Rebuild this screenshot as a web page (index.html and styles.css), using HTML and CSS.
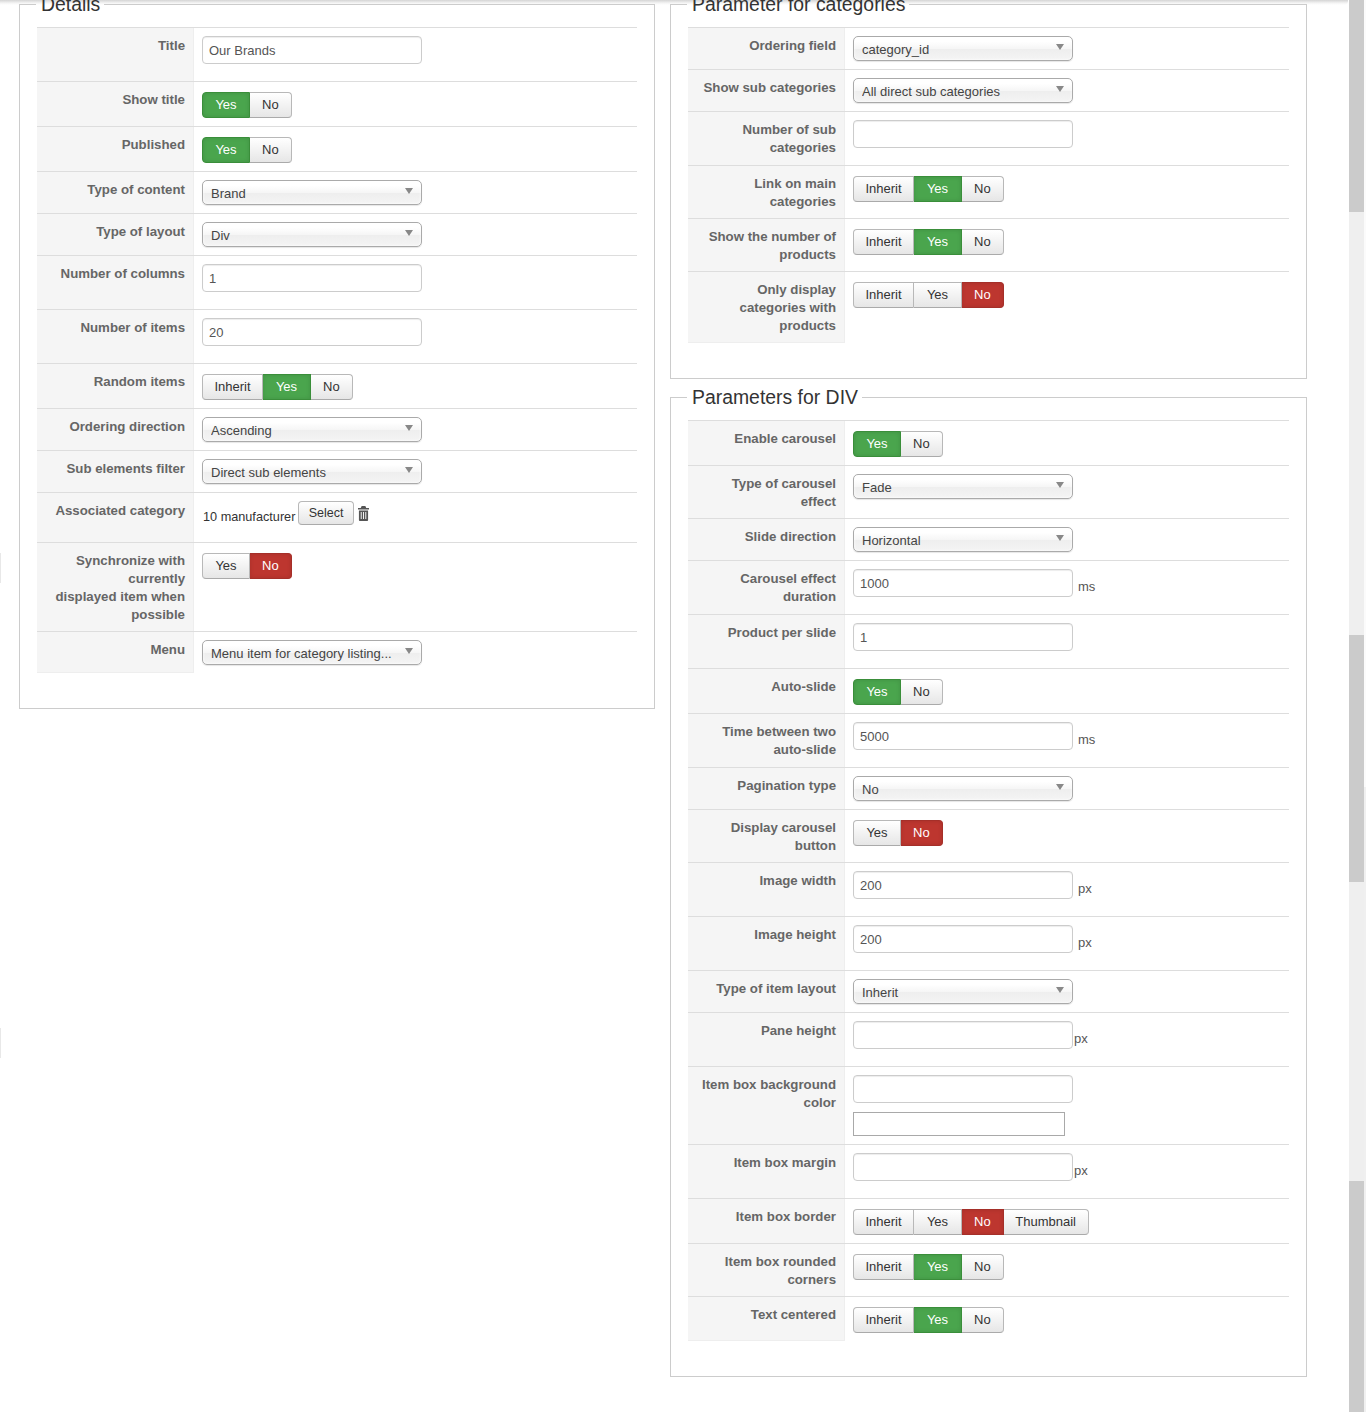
FILE: index.html
```html
<!DOCTYPE html>
<html lang="en">
<head>
<meta charset="utf-8">
<title>Module parameters</title>
<link rel="stylesheet" href="styles.css">
</head>
<body>
<div class="topshadow"></div>
<div class="edgemark edgemark-a"></div>
<div class="edgemark edgemark-b"></div>
<main class="columns">
  <div class="col">
    <fieldset class="panel">
      <legend>Details</legend>
      <div class="row"><div class="lbl">Title</div><div class="val"><div class="inp">Our Brands</div></div></div>
      <div class="row"><div class="lbl">Show title</div><div class="val"><div class="tg"><span class="b yes">Yes</span><span class="b">No</span></div></div></div>
      <div class="row"><div class="lbl">Published</div><div class="val"><div class="tg"><span class="b yes">Yes</span><span class="b">No</span></div></div></div>
      <div class="row"><div class="lbl">Type of content</div><div class="val"><div class="sel"><span class="seltxt">Brand</span><i class="arrow"></i></div></div></div>
      <div class="row"><div class="lbl">Type of layout</div><div class="val"><div class="sel"><span class="seltxt">Div</span><i class="arrow"></i></div></div></div>
      <div class="row"><div class="lbl">Number of columns</div><div class="val"><div class="inp">1</div></div></div>
      <div class="row"><div class="lbl">Number of items</div><div class="val"><div class="inp">20</div></div></div>
      <div class="row"><div class="lbl">Random items</div><div class="val"><div class="tg"><span class="b inh">Inherit</span><span class="b yes">Yes</span><span class="b">No</span></div></div></div>
      <div class="row"><div class="lbl">Ordering direction</div><div class="val"><div class="sel"><span class="seltxt">Ascending</span><i class="arrow"></i></div></div></div>
      <div class="row"><div class="lbl">Sub elements filter</div><div class="val"><div class="sel"><span class="seltxt">Direct sub elements</span><i class="arrow"></i></div></div></div>
      <div class="row"><div class="lbl">Associated category</div><div class="val assoc"><span class="assoc-txt">10 manufacturer</span><span class="selectbtn">Select</span><svg class="trash" viewBox="0 0 12 15" width="11" height="15" preserveAspectRatio="none" aria-hidden="true"><path d="M4 0h4l1 2h3v1.500H0V2h3zM1 4.500h10V14a1 1 0 0 1-1 1H2a1 1 0 0 1-1-1zM3 6v7h1V6zM5.500 6v7h1V6zM8 6v7h1V6z" fill="#555" fill-rule="evenodd"/></svg></div></div>
      <div class="row"><div class="lbl">Synchronize with currently displayed&nbsp;item&nbsp;when possible</div><div class="val"><div class="tg"><span class="b off">Yes</span><span class="b no">No</span></div></div></div>
      <div class="row last"><div class="lbl">Menu</div><div class="val"><div class="sel"><span class="seltxt">Menu item for category listing...</span><i class="arrow"></i></div></div></div>
    </fieldset>
  </div>
  <div class="col">
    <fieldset class="panel">
      <legend>Parameter for categories</legend>
      <div class="row"><div class="lbl">Ordering field</div><div class="val"><div class="sel"><span class="seltxt">category_id</span><i class="arrow"></i></div></div></div>
      <div class="row"><div class="lbl">Show sub categories</div><div class="val"><div class="sel"><span class="seltxt">All direct sub categories</span><i class="arrow"></i></div></div></div>
      <div class="row"><div class="lbl">Number of sub categories</div><div class="val"><div class="inp"></div></div></div>
      <div class="row"><div class="lbl">Link on main categories</div><div class="val"><div class="tg"><span class="b inh">Inherit</span><span class="b yes">Yes</span><span class="b">No</span></div></div></div>
      <div class="row"><div class="lbl">Show the number of products</div><div class="val"><div class="tg"><span class="b inh">Inherit</span><span class="b yes">Yes</span><span class="b">No</span></div></div></div>
      <div class="row last"><div class="lbl">Only display categories with products</div><div class="val"><div class="tg"><span class="b inh">Inherit</span><span class="b off">Yes</span><span class="b no">No</span></div></div></div>
    </fieldset>
    <fieldset class="panel">
      <legend>Parameters for DIV</legend>
      <div class="row"><div class="lbl">Enable carousel</div><div class="val"><div class="tg"><span class="b yes">Yes</span><span class="b">No</span></div></div></div>
      <div class="row"><div class="lbl">Type of carousel effect</div><div class="val"><div class="sel"><span class="seltxt">Fade</span><i class="arrow"></i></div></div></div>
      <div class="row"><div class="lbl">Slide direction</div><div class="val"><div class="sel"><span class="seltxt">Horizontal</span><i class="arrow"></i></div></div></div>
      <div class="row"><div class="lbl">Carousel effect duration</div><div class="val flexline"><div class="inp">1000</div><span class="unit">ms</span></div></div>
      <div class="row"><div class="lbl">Product per slide</div><div class="val"><div class="inp">1</div></div></div>
      <div class="row"><div class="lbl">Auto-slide</div><div class="val"><div class="tg"><span class="b yes">Yes</span><span class="b">No</span></div></div></div>
      <div class="row"><div class="lbl">Time between two auto-slide</div><div class="val flexline"><div class="inp">5000</div><span class="unit">ms</span></div></div>
      <div class="row"><div class="lbl">Pagination type</div><div class="val"><div class="sel"><span class="seltxt">No</span><i class="arrow"></i></div></div></div>
      <div class="row"><div class="lbl">Display carousel button</div><div class="val"><div class="tg"><span class="b off">Yes</span><span class="b no">No</span></div></div></div>
      <div class="row"><div class="lbl">Image width</div><div class="val flexline"><div class="inp">200</div><span class="unit">px</span></div></div>
      <div class="row"><div class="lbl">Image height</div><div class="val flexline"><div class="inp">200</div><span class="unit">px</span></div></div>
      <div class="row"><div class="lbl">Type of item layout</div><div class="val"><div class="sel"><span class="seltxt">Inherit</span><i class="arrow"></i></div></div></div>
      <div class="row"><div class="lbl">Pane height</div><div class="val flexline"><div class="inp"></div><span class="unit tight">px</span></div></div>
      <div class="row"><div class="lbl">Item box background color</div><div class="val"><div class="inp"></div><div class="colorbox"></div></div></div>
      <div class="row"><div class="lbl">Item box margin</div><div class="val flexline"><div class="inp"></div><span class="unit tight">px</span></div></div>
      <div class="row"><div class="lbl">Item box border</div><div class="val"><div class="tg"><span class="b inh">Inherit</span><span class="b off">Yes</span><span class="b no">No</span><span class="b thumb">Thumbnail</span></div></div></div>
      <div class="row"><div class="lbl">Item box rounded corners</div><div class="val"><div class="tg"><span class="b inh">Inherit</span><span class="b yes">Yes</span><span class="b">No</span></div></div></div>
      <div class="row last"><div class="lbl">Text centered</div><div class="val"><div class="tg"><span class="b inh">Inherit</span><span class="b yes">Yes</span><span class="b">No</span></div></div></div>
    </fieldset>
  </div>
</main>
<aside class="scrollbar">
  <div class="thumb t1"></div>
  <div class="track t2"></div>
  <div class="thumb t3"></div>
  <div class="track t4"></div>
  <div class="thumb t5"></div>
</aside>
<div class="scroll-edge"></div>
</body>
</html>
```
FILE: styles.css
```css
* { box-sizing: border-box; }
html, body { margin: 0; padding: 0; height: 1412px; overflow: hidden; background: #fff; }
body {
  display: flex;
  font-family: "Liberation Sans", Arial, sans-serif;
  font-size: 13px;
  line-height: 18px;
  color: #333;
  position: relative;
}
.topshadow {
  position: absolute; left: 0; top: 0; width: 1348px; height: 5px;
  background: linear-gradient(#d4d4d4, #f4f4f4 60%, rgba(255,255,255,0));
  border-bottom-right-radius: 4px;
}
.edgemark { position: absolute; left: 0; width: 1px; height: 30px; background: #e8e8e8; }
.edgemark-a { top: 553px; }
.edgemark-b { top: 1028px; }
.columns {
  position: relative;
  flex: 0 0 1349px;
  display: grid;
  grid-template-columns: 636px 637px;
  column-gap: 15px;
  align-items: start;
  padding-left: 19px;
  margin-top: -8px;
}
.col { display: flex; flex-direction: column; row-gap: 6px; }
.panel {
  margin: 0;
  min-width: 0;
  border: 1px solid #ccc;
  padding: 11px 17px 35px;
}
legend {
  margin-left: -1px;
  padding: 0 4px 0 5px;
  font-size: 19.4px;
  line-height: 24px;
  color: #333;
}
.row { display: flex; border-top: 1px solid #ddd; }
.lbl {
  flex: 0 0 157px;
  padding: 9px 8px 7px 8px;
  background: #f5f5f5;
  border-right: 1px solid #eee;
  text-align: right;
  font-size: 13.25px;
  font-weight: bold;
  color: #666;
}
.row.last .lbl { border-bottom: 1px solid #eee; }
.val { flex: 1; padding: 8px; min-width: 0; }
.flexline { display: flex; align-items: flex-start; }
.inp {
  width: 220px; height: 28px; margin-bottom: 9px;
  padding: 4px 6px;
  border: 1px solid #ccc; border-radius: 4px;
  box-shadow: inset 0 1px 1px rgba(0,0,0,.075);
  color: #555; line-height: 20px; background: #fff;
}
.unit { margin: 8px 0 0 5px; color: #555; line-height: 20px; }
.unit.tight { margin-left: 1px; }
.colorbox { width: 212px; height: 24px; border: 1px solid #a9a9a9; background: #fff; }
.sel {
  display: flex; align-items: center;
  width: 220px; height: 25px; padding: 2px 8px 0;
  border: 1px solid #aaa; border-radius: 5px;
  background: linear-gradient(#fff 20%, #f6f6f6 50%, #eee 52%, #f4f4f4 100%);
  box-shadow: 0 0 3px #fff inset, 0 1px 1px rgba(0,0,0,.1);
  color: #444;
}
.seltxt { flex: 1; overflow: hidden; white-space: nowrap; }
.arrow {
  flex: none; margin: -5px 0 0 4px;
  border-left: 4px solid transparent; border-right: 4px solid transparent;
  border-top: 6px solid #888;
}
.tg { display: inline-flex; margin-top: 2px; height: 26px; vertical-align: top; }
.b {
  display: block; padding: 3px 12px; text-align: center;
  border: 1px solid #b8b8b8; border-bottom-color: #aaa; border-left-width: 0;
  background: linear-gradient(#fff, #e6e6e6);
  color: #333; line-height: 18px;
}
.b:first-child { border-left-width: 1px; border-radius: 4px 0 0 4px; }
.b:last-child { border-radius: 0 4px 4px 0; }
.b.inh { width: 61px; padding: 3px 0; }
.b.off, .b.yes { width: 48px; padding: 3px 0; }
.b.thumb { width: 85px; padding: 3px 0; }
.b.yes { background: #4aa54d; border-color: #3a8e3a; color: #fff; box-shadow: inset 0 0 4px rgba(0,0,0,.12); }
.b.no { background: #bd362f; border-color: #a52f29; color: #fff; box-shadow: inset 0 0 4px rgba(0,0,0,.12); }
.assoc { display: flex; align-items: flex-start; min-height: 49px; }
.assoc-txt { width: 92px; margin: 7px 3px 0 1px; white-space: nowrap; font-size: 12.7px; }
.selectbtn {
  width: 56px; height: 24px; padding: 2px 0; text-align: center; border: 1px solid #b8b8b8; border-bottom-color: #aaa; border-radius: 4px;
  background: linear-gradient(#fff, #e6e6e6); font-size: 12.5px; line-height: 18px;
}
.trash { margin: 5px 0 0 4px; flex: none; }
.scrollbar { flex: 0 0 15px; display: flex; flex-direction: column; height: 1412px; }
.thumb { background: #cbcbcb; }
.b.thumb { background: linear-gradient(#fff, #e6e6e6); }
.track { background: #efefef; }
.t1 { height: 212px; }
.t2 { height: 423px; }
.t3 { height: 247px; }
.t4 { height: 299px; }
.t5 { height: 231px; }
.scroll-edge { flex: 0 0 2px; height: 1412px; background: linear-gradient(#fbfbfb 787px, #f0f0f0 787px); }
```
